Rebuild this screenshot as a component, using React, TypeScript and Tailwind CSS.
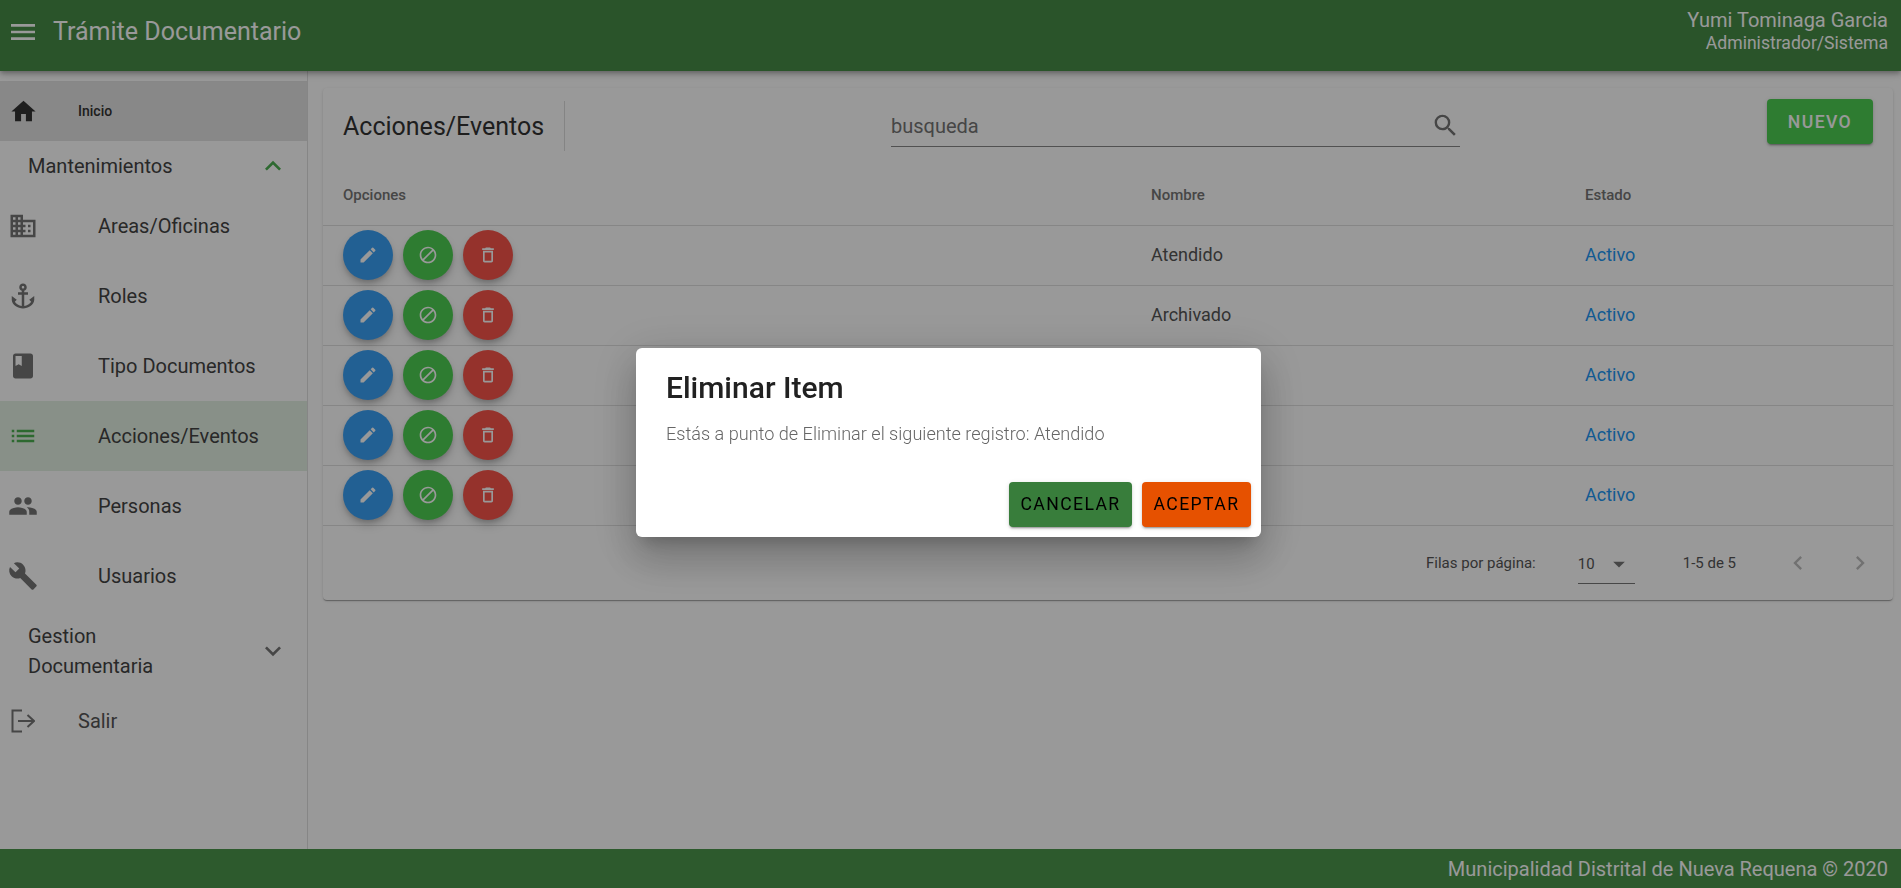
import { MdMenu, MdHome, MdExpandLess, MdExpandMore, MdDomain, MdAnchor, MdBook, MdList, MdPeople, MdBuild, MdSearch, MdEdit, MdBlock, MdDeleteOutline, MdArrowDropDown, MdChevronLeft, MdChevronRight } from 'react-icons/md';

const subItems = [
  { label: 'Areas/Oficinas', icon: MdDomain },
  { label: 'Roles', icon: MdAnchor },
  { label: 'Tipo Documentos', icon: MdBook },
  { label: 'Acciones/Eventos', icon: MdList, active: true },
  { label: 'Personas', icon: MdPeople },
  { label: 'Usuarios', icon: MdBuild },
];

const rows = ['Atendido', 'Archivado', 'Derivado', 'Observado', 'Recibido'];

const ExitIcon = () => (
  <svg viewBox="0 0 24 24" fill="none" stroke="currentColor" strokeWidth="2" className="w-[24px] h-[24px]">
    <path d="M11 1.5H1.5V22.5H11" />
    <path d="M7 12H23M16.5 6L23 12L16.5 18" />
  </svg>
);

const Sidebar = () => (
  <aside className="w-[308px] shrink-0 border-r border-[#e0e0e0] pt-[10px] text-[#444]">
    <div className="h-[60px] bg-[#e3e3e3] flex items-center pl-[11px]">
      <MdHome className="w-[29px] h-[29px] -ml-[2px] text-[#333]" />
      <span className="ml-[40px] text-[14px] font-medium text-[#333]">Inicio</span>
    </div>
    <div className="h-[50px] flex items-center justify-between pl-[28px] pr-[18px] text-[20px] text-[#444]">
      <span>Mantenimientos</span>
      <MdExpandLess className="w-[32px] h-[32px] text-[#4caf50]" />
    </div>
    <div>
      {subItems.map((item) => (
        <div key={item.label} className={`h-[70px] flex items-center pl-[8px] text-[20px] ${item.active ? 'bg-[#e3f0e3]' : ''}`}>
          <item.icon className={`w-[30px] h-[30px] shrink-0 ${item.active ? 'text-[#4caf50]' : 'text-[#757575]'}`} />
          <span className="ml-[60px] text-[#444]">{item.label}</span>
        </div>
      ))}
    </div>
    <div className="flex items-center justify-between pl-[28px] pr-[18px] text-[20px] leading-[30px] pt-[10px] pb-[8px] text-[#444]">
      <span className="w-[130px]">Gestion Documentaria</span>
      <MdExpandMore className="w-[32px] h-[32px] text-[#757575]" />
    </div>
    <div className="flex items-center pl-[11px] h-[50px] mt-[7px] text-[20px] text-[#555]">
      <span className="text-[#757575]"><ExitIcon /></span>
      <span className="ml-[43px]">Salir</span>
    </div>
  </aside>
);

const RoundButton = ({ color, children }: { color: string; children: React.ReactNode }) => (
  <button className={`w-[50px] h-[50px] rounded-full flex items-center justify-center text-white shadow-[0_3px_5px_-1px_rgba(0,0,0,0.2),0_6px_10px_0_rgba(0,0,0,0.14)] ${color}`}>
    {children}
  </button>
);

const Card = () => (
  <div className="bg-white rounded-[4px] shadow-[0_2px_1px_-1px_rgba(0,0,0,0.2),0_1px_1px_0_rgba(0,0,0,0.14),0_1px_3px_0_rgba(0,0,0,0.12)]">
    {/* Toolbar */}
    <div className="h-[88px] flex items-start relative">
      <div className="pl-[20px] w-[242px] h-[50px] mt-[13px] pt-[2px] border-r border-[#dcdcdc] flex items-center text-[25px] text-[#333]">
        Acciones/Eventos
      </div>
      <div className="ml-[326px] mt-[13px] w-[569px] h-[46px] border-b border-[#888] flex items-center justify-between pt-[4px]">
        <span className="text-[20px] text-[#757575]">busqueda</span>
        <MdSearch className="w-[29px] h-[29px] text-[#757575]" />
      </div>
      <button className="ml-auto mr-[20px] mt-[11px] w-[106px] h-[45px] pt-[1px] rounded-[4px] bg-[#4ecf53] text-white text-[17.6px] font-medium tracking-[1.4px] shadow-[0_3px_1px_-2px_rgba(0,0,0,0.2),0_2px_2px_0_rgba(0,0,0,0.14),0_1px_5px_0_rgba(0,0,0,0.12)]">
        NUEVO
      </button>
    </div>
    {/* Table */}
    <div className="grid grid-cols-[808px_434px_1fr] pl-[20px] h-[50px] items-center border-b border-[#e0e0e0] text-[15px] font-medium text-[#757575] pb-[11px]">
      <span>Opciones</span>
      <span>Nombre</span>
      <span>Estado</span>
    </div>
    {rows.map((name) => (
      <div key={name} className="grid grid-cols-[808px_434px_1fr] pl-[20px] h-[60px] pb-[2px] items-center border-b border-[#e0e0e0] text-[18px] text-[#555]">
        <div className="flex gap-[10px]">
          <RoundButton color="bg-[#3aa0f5]"><MdEdit className="w-[20px] h-[20px]" /></RoundButton>
          <RoundButton color="bg-[#4ecf53]"><MdBlock className="w-[20px] h-[20px]" /></RoundButton>
          <RoundButton color="bg-[#f8544a]"><MdDeleteOutline className="w-[20px] h-[20px]" /></RoundButton>
        </div>
        <span>{name}</span>
        <span className="text-[#2196f3]">Activo</span>
      </div>
    ))}
    {/* Pagination */}
    <div className="h-[74px] flex items-center text-[15px] text-[#555]">
      <span className="ml-[1103px]">Filas por página:</span>
      <div className="ml-[42px] w-[57px] h-[40px] border-b border-[#777] flex items-center justify-between pt-[1px] pr-[2px] mt-[2px]">
        <span>10</span>
        <MdArrowDropDown className="w-[28px] h-[28px] text-[#757575]" />
      </div>
      <span className="ml-[48px]">1-5 de 5</span>
      <MdChevronLeft className="ml-[48px] w-[28px] h-[28px] text-[#bdbdbd]" />
      <MdChevronRight className="ml-[34px] w-[28px] h-[28px] text-[#bdbdbd]" />
    </div>
  </div>
);

const Dialog = () => (
  <div className="fixed inset-0 z-50 bg-black/40 flex items-center justify-center pr-[4px] pb-[3px]">
    <div className="w-[625px] h-[189px] bg-white rounded-[6px] shadow-[0_11px_15px_-7px_rgba(0,0,0,0.2),0_24px_38px_3px_rgba(0,0,0,0.14),0_9px_46px_8px_rgba(0,0,0,0.12)] flex flex-col">
      <h2 className="pl-[30px] pt-[21px] text-[30px] leading-[38px] font-medium text-[#212121]">Eliminar Item</h2>
      <p className="pl-[30px] pt-[15px] text-[18.1px] leading-[24px] font-light text-[#666]">
        Estás a punto de Eliminar el siguiente registro: Atendido
      </p>
      <div className="mt-auto flex justify-end gap-[10px] pr-[10px] pb-[10px]">
        <button className="w-[123px] h-[45px] rounded-[4px] bg-[#387d3b] text-black text-[17.6px] tracking-[1.4px] shadow-[0_3px_1px_-2px_rgba(0,0,0,0.2),0_2px_2px_0_rgba(0,0,0,0.14),0_1px_5px_0_rgba(0,0,0,0.12)]">
          CANCELAR
        </button>
        <button className="w-[109px] h-[45px] rounded-[4px] bg-[#e65100] text-black text-[17.6px] tracking-[1.4px] shadow-[0_3px_1px_-2px_rgba(0,0,0,0.2),0_2px_2px_0_rgba(0,0,0,0.14),0_1px_5px_0_rgba(0,0,0,0.12)]">
          ACEPTAR
        </button>
      </div>
    </div>
  </div>
);

export default function App() {
  return (
    <div className="h-screen flex flex-col bg-white font-['Roboto',sans-serif] overflow-hidden">
      <header className="h-[71px] shrink-0 bg-[#468d46] text-white flex items-center justify-between pl-[7px] pr-[13px] pb-[8px] relative z-10 shadow-[0_2px_4px_-1px_rgba(0,0,0,0.2),0_4px_5px_0_rgba(0,0,0,0.14),0_1px_10px_0_rgba(0,0,0,0.12)]">
        <div className="flex items-center">
          <MdMenu className="w-[32px] h-[32px]" />
          <span className="ml-[14px] pt-[1px] text-[25px]">Trámite Documentario</span>
        </div>
        <div className="text-right">
          <div className="text-[20px] leading-[24px]">Yumi Tominaga Garcia</div>
          <div className="text-[17.6px] leading-[23px]">Administrador/Sistema</div>
        </div>
      </header>
      <div className="flex-1 flex min-h-0">
        <Sidebar />
        <main className="flex-1 pt-[17px] pl-[15px] pr-[8px]">
          <Card />
        </main>
      </div>
      <footer className="h-[39px] shrink-0 bg-[#4b964b] text-white flex items-center justify-end pr-[13px] text-[20px]">
        Municipalidad Distrital de Nueva Requena © 2020
      </footer>
      <Dialog />
    </div>
  );
}
